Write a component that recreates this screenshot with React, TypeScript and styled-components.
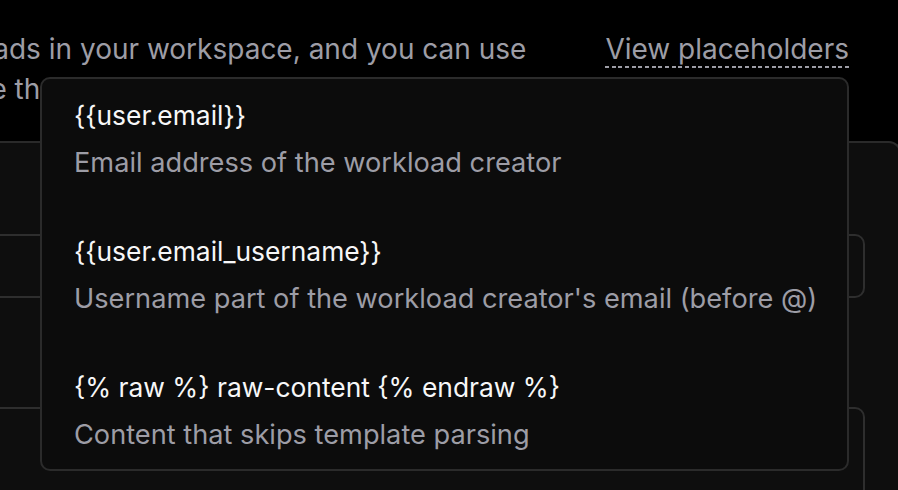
import { FC } from "react";
import styled, { createGlobalStyle } from "styled-components";

const GlobalStyle = createGlobalStyle`
  html, body {
    margin: 0;
    background: #000;
    overflow: hidden;
  }
  body {
    font-family: Inter, "Noto Sans", sans-serif;
    -webkit-font-smoothing: antialiased;
  }
`;

interface IPlaceholder {
  token: string;
  description: string;
}

const placeholders: IPlaceholder[] = [
  { token: "{{user.email}}", description: "Email address of the workload creator" },
  {
    token: "{{user.email_username}}",
    description: "Username part of the workload creator's email (before @)",
  },
  {
    token: "{% raw %} raw-content {% endraw %}",
    description: "Content that skips template parsing",
  },
];

const PlaceholderPopover: FC = () => {
  return (
    <Popover role="dialog">
      {placeholders.map((item) => (
        <Item key={item.token}>
          <Token>{item.token}</Token>
          <Description>{item.description}</Description>
        </Item>
      ))}
    </Popover>
  );
};

const App: FC = () => {
  return (
    <>
      <GlobalStyle />
      <Page>
        <Header>
          <Intro>
            <span>the workloads in your workspace, and you can use</span>
            <span>them inside the name field.</span>
          </Intro>
          <LinkWrap>
            <ViewLink type="button">View placeholders</ViewLink>
            <PlaceholderPopover />
          </LinkWrap>
        </Header>
        <Panel>
          <FieldGroup>
            <Label>Name</Label>
            <Field $height={64} />
          </FieldGroup>
          <FieldGroup>
            <Label>Description</Label>
            <Field $height={180} />
          </FieldGroup>
        </Panel>
      </Page>
    </>
  );
};

export default App;

const Page = styled.div`
  margin-left: -320px;
  width: calc(100% + 323px);
  min-height: 100vh;
  display: flex;
  flex-direction: column;
`;

const Header = styled.div`
  display: flex;
  justify-content: flex-end;
  align-items: flex-start;
  column-gap: 79px;
  padding: 29px 52px 32px 0;
  font-size: 28px;
  line-height: 40px;
  color: #9d9da6;
`;

const Intro = styled.p`
  margin: 0;
  flex: none;
  display: flex;
  flex-direction: column;
  white-space: nowrap;
`;

const LinkWrap = styled.div`
  position: relative;
  flex: none;
`;

const ViewLink = styled.button`
  display: block;
  margin: 0;
  padding: 0;
  border: 0;
  font: inherit;
  color: inherit;
  cursor: pointer;
  background: repeating-linear-gradient(
      90deg,
      #9d9da6 0 4px,
      transparent 4px 6.67px
    )
    left calc(100% - 1px) / 100% 2px no-repeat;
`;

const Popover = styled.div`
  position: absolute;
  top: calc(100% + 8px);
  right: 0;
  z-index: 10;
  width: 809px;
  box-sizing: border-box;
  display: flex;
  flex-direction: column;
  row-gap: 56px;
  padding: 20px 32px 18px;
  background-color: #0c0c0c;
  border: 2px solid #2b2b2b;
  border-radius: 10px;
`;

const Item = styled.div`
  display: flex;
  flex-direction: column;
  row-gap: 16px;
  white-space: nowrap;
`;

const Token = styled.div`
  font-size: 26.4px;
  line-height: 32px;
  color: #f7f7f8;
`;

const Description = styled.div`
  font-size: 27.2px;
  line-height: 32px;
  color: #9d9da6;
`;

const Panel = styled.section`
  flex: 1;
  display: flex;
  flex-direction: column;
  row-gap: 50px;
  padding: 32px 34px 40px 34px;
  background-color: #0e0e0e;
  border: 2px solid #2a2a2a;
  border-bottom: 0;
  border-top-right-radius: 12px;
`;

const FieldGroup = styled.div`
  display: flex;
  flex-direction: column;
  row-gap: 27px;
`;

const Label = styled.label`
  font-size: 27.2px;
  line-height: 32px;
  color: #f7f7f8;
`;

const Field = styled.div<{ $height: number }>`
  height: ${({ $height }) => $height}px;
  box-sizing: border-box;
  border: 2px solid #2e2e2e;
  border-radius: 10px;
  background-color: #0e0e0e;
`;
